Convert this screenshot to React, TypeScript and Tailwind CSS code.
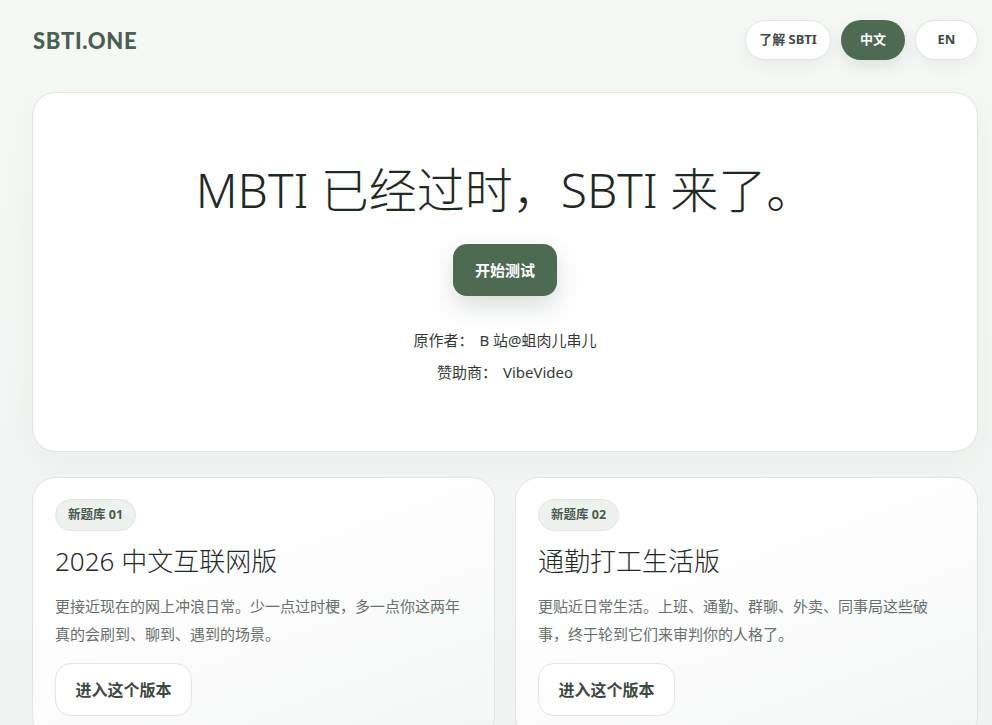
import React from "react";

const sans = '"Noto Sans", "Noto Sans CJK SC", sans-serif';

const editions = [
  {
    tag: "新题库 01",
    title: "2026 中文互联网版",
    desc: "更接近现在的网上冲浪日常。少一点过时梗，多一点你这两年真的会刷到、聊到、遇到的场景。",
  },
  {
    tag: "新题库 02",
    title: "通勤打工生活版",
    desc: "更贴近日常生活。上班、通勤、群聊、外卖、同事局这些破事，终于轮到它们来审判你的人格了。",
  },
];

function NavPill({ label, active, width }: { label: string; active?: boolean; width: string }) {
  return (
    <button
      className={
        (active
          ? "bg-[#4d6a52] text-white shadow-[0_6px_16px_rgba(40,70,50,0.12)]"
          : "border border-[#e2e7e3] bg-white text-[#3f4b44] shadow-[0_6px_16px_rgba(40,70,50,0.06)]") +
        " h-10 rounded-full text-[13px] font-bold " +
        width
      }
    >
      {label}
    </button>
  );
}

export default function App() {
  return (
    <div
      className="min-h-screen bg-[linear-gradient(180deg,#f6f8f6,#f0f3f1)] pl-8 pr-[14px] pb-10"
      style={{ fontFamily: sans }}
    >
      <header className="flex h-[80px] items-center justify-between">
        <div
          className="pl-px text-[22px] font-black tracking-[0.03em] text-[#4a6150]"
          style={{ fontFamily: '"Lato", "Noto Sans", sans-serif' }}
        >
          SBTI.ONE
        </div>
        <nav className="flex items-center gap-[10px]">
          <NavPill label="了解 SBTI" width="w-[86px]" />
          <NavPill label="中文" active width="w-16" />
          <NavPill label="EN" width="w-[63px]" />
        </nav>
      </header>

      <section className="mt-3 flex h-[360px] flex-col items-center rounded-[24px] border border-[#e1e6e2] bg-white pt-[65px] shadow-[0_10px_30px_rgba(40,70,50,0.04)]">
        <h1 className="text-[48px] font-light leading-[64px] text-[#1f2a24]">
          MBTI 已经过时，SBTI 来了。
        </h1>
        <button className="mt-[22px] h-[52px] w-[104px] rounded-[14px] bg-[#4d6a52] text-[15px] font-bold text-white shadow-[0_10px_24px_rgba(40,70,50,0.18)]">
          开始测试
        </button>
        <div className="mt-[34px] flex flex-col items-center gap-[12px] text-[15px] leading-[20px] text-[#333a36]">
          <p>
            原作者：<span className="ml-[6px]">B 站@蛆肉儿串儿</span>
          </p>
          <p>
            赞助商：<span className="ml-[6px]">VibeVideo</span>
          </p>
        </div>
      </section>

      <div className="mt-[25px] grid grid-cols-2 gap-5">
        {editions.map((e) => (
          <div
            key={e.tag}
            className="rounded-[24px] border border-[#e1e6e2] bg-[linear-gradient(160deg,#ffffff_30%,#f3f6f4)] px-[22px] pt-[21px] pb-6"
          >
            <span className="inline-flex h-8 items-center rounded-full border border-[#e2e7e3] bg-[#eef2ef] px-3 text-[12.5px] font-bold text-[#4a5a50]">
              {e.tag}
            </span>
            <h2 className="mt-[12px] text-[26px] font-light leading-[36px] text-[#1f2a24]">
              {e.title}
            </h2>
            <p className="mt-[13px] text-[15px] leading-[28px] text-[#68706b]">{e.desc}</p>
            <button className="mt-[15px] h-[53px] w-[137px] rounded-[16px] border border-[#e2e7e3] bg-white text-[16px] font-bold text-[#3d4a42]">
              进入这个版本
            </button>
          </div>
        ))}
      </div>
    </div>
  );
}
